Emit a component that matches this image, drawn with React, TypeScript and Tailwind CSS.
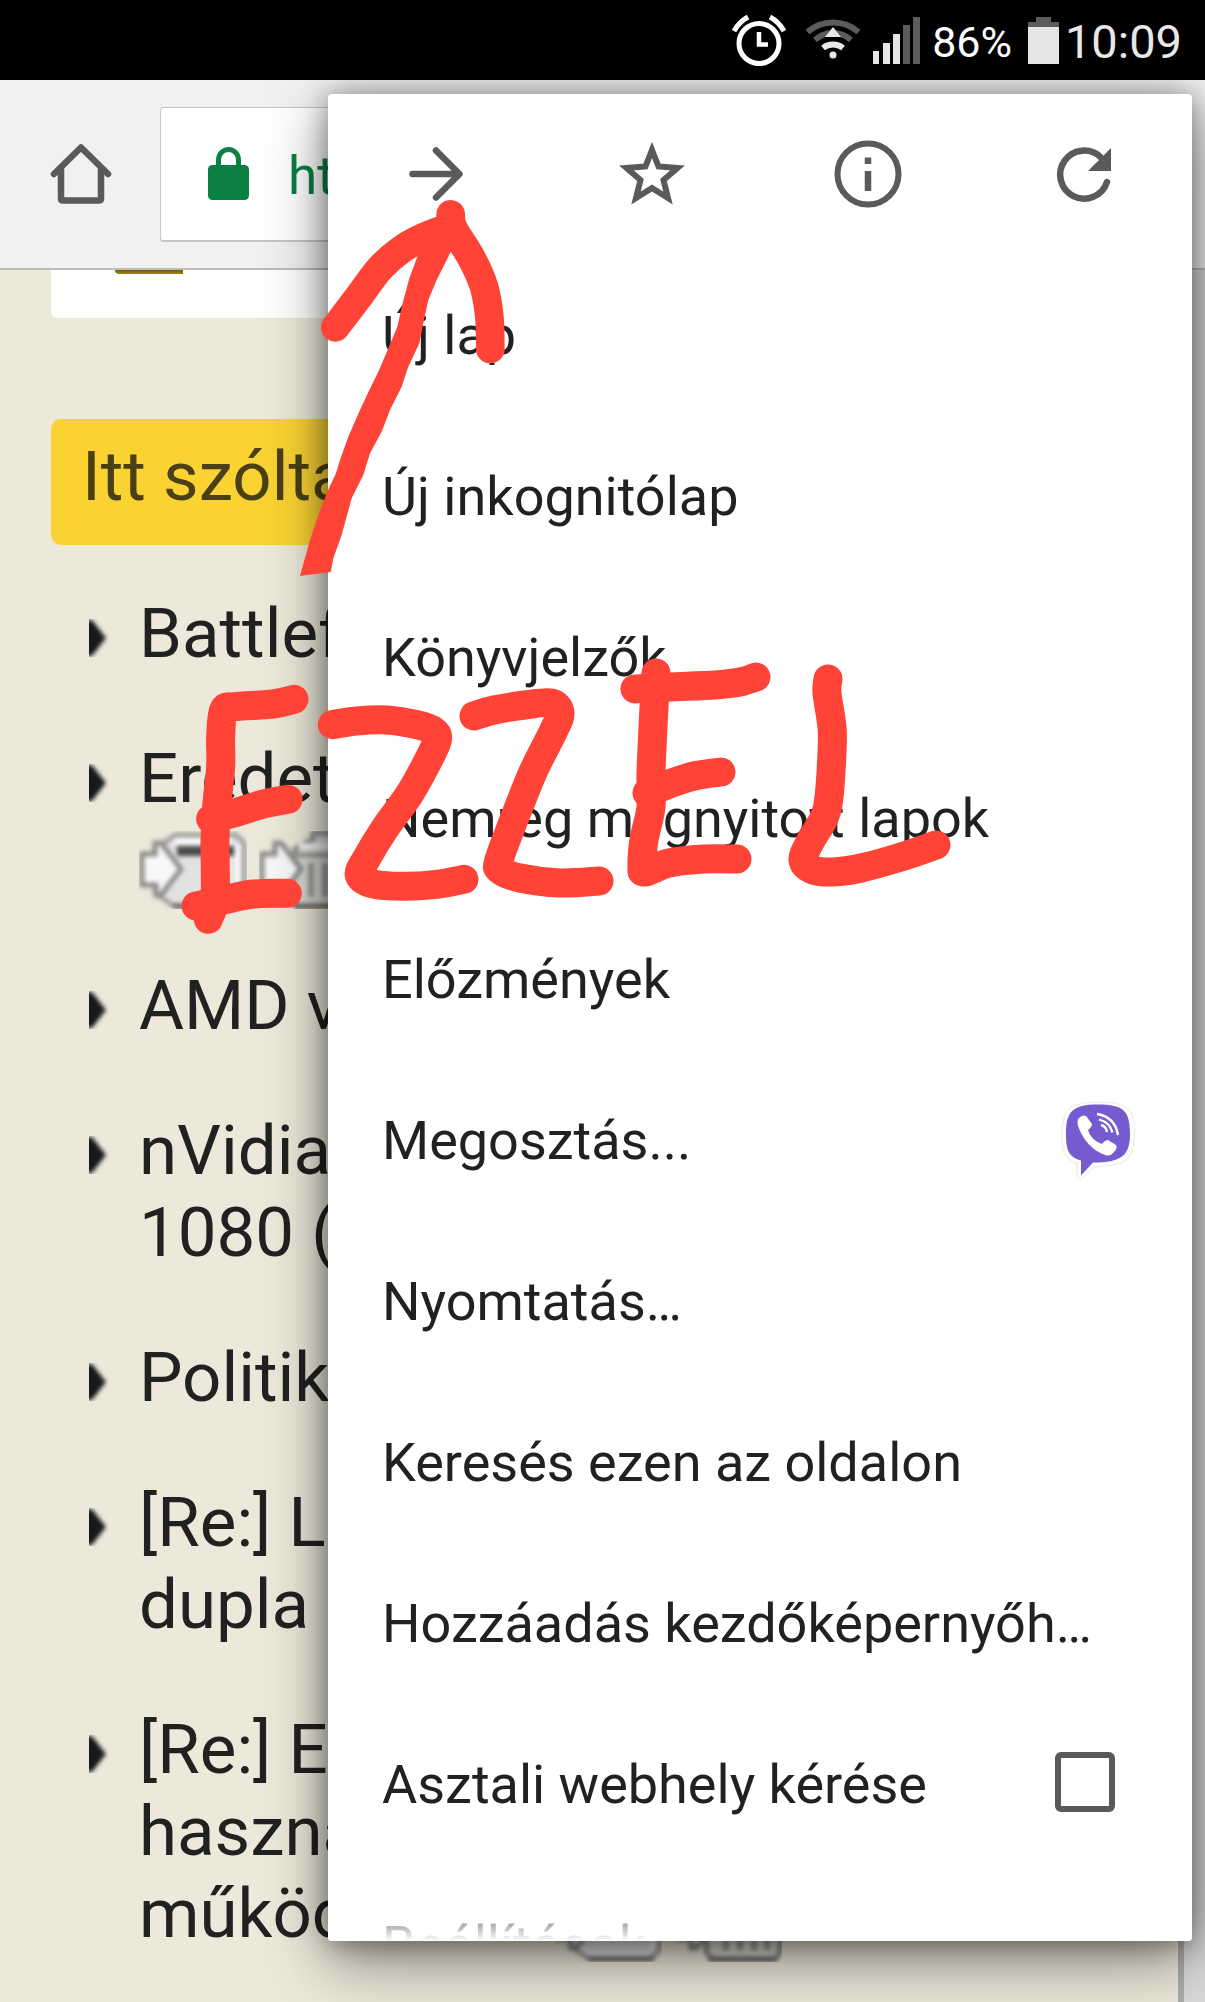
import type { ReactNode } from "react";

type Point = [number, number];

/* Turns a list of points into a smooth freehand path. */
function smooth(points: Point[]): string {
  let d = `M${points[0][0]} ${points[0][1]}`;
  for (let i = 0; i < points.length - 1; i++) {
    const a = points[i - 1] ?? points[i];
    const b = points[i];
    const c = points[i + 1];
    const e = points[i + 2] ?? c;
    d += ` C${b[0] + (c[0] - a[0]) / 6} ${b[1] + (c[1] - a[1]) / 6} ${c[0] - (e[0] - b[0]) / 6} ${c[1] - (e[1] - b[1]) / 6} ${c[0]} ${c[1]}`;
  }
  return d;
}

const arrowStrokes: Point[][] = [
  [[166, 412], [240, 315], [300, 235], [365, 178], [430, 142], [512, 110]],
  [[512, 73], [520, 115], [575, 205], [612, 290], [628, 380], [631, 477]],
];

const leftLetters: Point[][] = [
  [[522, 178], [460, 192], [345, 200], [311, 210], [302, 290], [302, 380], [290, 500], [285, 600], [285, 770], [265, 838]],
  [[272, 537], [350, 517], [430, 492], [504, 478]],
  [[228, 798], [310, 780], [400, 762], [502, 760]],
  [[637, 254], [710, 243], [800, 240], [890, 254], [940, 272], [952, 300], [920, 370], [870, 460], [795, 565], [740, 655], [718, 705], [760, 732], [850, 739], [950, 733], [1032, 718]],
];

const rightLetters: Point[][] = [
  [[474, 716], [494, 710], [525, 705], [551, 703], [560, 713], [553, 732], [533, 772], [513, 822], [499, 860], [500, 870], [520, 878], [560, 883], [599, 881]],
  [[635, 689], [669, 687], [715, 685], [740, 682], [756, 677]],
  [[656, 673], [654, 707], [651, 773], [651, 807], [644, 840], [642, 866], [645, 872], [669, 863], [704, 859], [737, 859]],
  [[647, 793], [669, 784], [694, 776], [721, 772]],
  [[828, 679], [827, 693], [832, 727], [832, 752], [829, 797], [824, 818], [810, 842], [803, 860], [813, 870], [833, 872], [861, 868], [901, 857], [936, 845]],
];

function Annotation() {
  return (
    <svg
      className="pointer-events-none absolute left-0 top-0 z-30 h-[2002px] w-[1205px] max-w-none"
      viewBox="0 0 1205 2002"
      fill="none"
      stroke="#ff4336"
      strokeLinecap="round"
      strokeLinejoin="round"
      aria-hidden="true"
    >
      <g transform="translate(280 190) scale(0.33333)" strokeWidth="86">
        {arrowStrokes.map((p, i) => (
          <path key={i} d={smooth(p)} />
        ))}
        <path
          stroke="none"
          fill="#ff4336"
          d="M430 120L412 200L388 265L368 340L352 410L325 475L295 545L268 600L240 660L205 740L180 810L168 850L142 905L112 985L90 1050L60 1158L152 1146L160 1105L185 1035L215 925L250 855L270 790L305 725L330 660L365 590L385 530L418 460L432 390L445 330L470 270L512 186L540 120Z"
        />
      </g>
      <g transform="translate(120 640) scale(0.33333)" strokeWidth="87">
        {leftLetters.map((p, i) => (
          <path key={i} d={smooth(p)} />
        ))}
      </g>
      <g strokeWidth="29">
        {rightLetters.map((p, i) => (
          <path key={i} d={smooth(p)} />
        ))}
      </g>
    </svg>
  );
}

function StatusBar() {
  return (
    <header className="relative z-20 flex h-[80px] shrink-0 items-center justify-end bg-black pr-[23px] text-white">
      <svg className="h-[80px] w-[54px]" viewBox="732 0 54 80" fill="none" stroke="#fff" aria-label="Ébresztő">
        <circle cx="759" cy="43.500" r="20" strokeWidth="5" />
        <path d="M759 32v12.500h9" strokeWidth="4.500" />
        <path d="M734 31q5-9 14-14M784 31q-5-9-14-14" strokeWidth="5" />
      </svg>
      <svg className="ml-[18px] h-[80px] w-[58px]" viewBox="804 0 58 80" fill="none" aria-label="Wi-Fi">
        <path d="M807.500 32a39 39 0 0 1 51 0" stroke="#5c5c5c" strokeWidth="6" />
        <path d="M815 40a27 27 0 0 1 36 0" stroke="#5c5c5c" strokeWidth="6" />
        <path d="M823 48a16 16 0 0 1 20 0" stroke="#e8e8e8" strokeWidth="6" />
        <path d="M833 27l8 10h-16z" fill="#e8e8e8" />
        <circle cx="833" cy="55" r="3.500" fill="#e8e8e8" />
      </svg>
      <svg className="ml-[10px] h-[80px] w-[48px]" viewBox="872 0 48 80" aria-label="Térerő">
        <path d="M873 51h6v13h-6zM883 43h7v21h-7zM893 34h7v30h-7z" fill="#e6e6e6" />
        <path d="M903 25h7v39h-7zM913 17h7v47h-7z" fill="#5c5c5c" />
      </svg>
      <span className="ml-[12px] pt-[4px] text-[43px] leading-[76px]">86%</span>
      <svg className="ml-[16px] h-[80px] w-[32px]" viewBox="1028 0 32 80" aria-label="Akkumulátor">
        <path d="M1028 22h8v-5h15v5h8v6h-31z" fill="#5c5c5c" />
        <path d="M1028 27h31v37h-31z" fill="#e6e6e6" />
      </svg>
      <time className="ml-[5px] pt-[4px] text-[47px] leading-[76px] text-[#e8e8e8]">10:09</time>
    </header>
  );
}

function Toolbar() {
  return (
    <div className="relative z-[1] flex h-[190px] shrink-0 items-center border-b-2 border-[#bcbcb8] bg-[#f1f1f1] pl-[50px]">
      <button type="button" aria-label="Kezdőlap">
        <svg className="h-[62px] w-[62px]" viewBox="49.500 143 62 62" fill="none" stroke="#5a5a5a" strokeWidth="6.500" strokeLinecap="round" strokeLinejoin="round">
          <path d="M53.500 174L80.500 147.500L107.500 174" />
          <path d="M60.500 168V198.500q0 2 2 2h36q2 0 2-2V168" />
        </svg>
      </button>
      <div className="ml-[48px] mr-[120px] flex h-[135px] flex-1 items-center rounded-[4px] border border-b-2 border-[#c6c6c6] bg-white pl-[47px]">
        <svg className="h-[54px] w-[42px] shrink-0" viewBox="208 146 42 54" aria-hidden="true">
          <rect x="208" y="164" width="41" height="35" rx="4.500" fill="#0b8043" />
          <path d="M218.500 166v-7a10 10.500 0 0 1 20 0v7" fill="none" stroke="#0b8043" strokeWidth="5" />
        </svg>
        <input
          aria-label="Webcím"
          defaultValue="https://"
          className="ml-[38px] w-full min-w-0 bg-transparent pt-[4px] text-[53px] leading-[62px] text-[#0b8043] outline-none"
        />
      </div>
    </div>
  );
}

/* Soft-edged forum icons: a page with an arrow, and a bin with an arrow. */
function PostIcon({ bin = false }: { bin?: boolean }) {
  return (
    <svg className="h-[78px] w-[108px] shrink-0" viewBox="0 0 108 78" aria-hidden="true">
      <g className="blur-[2px]">
        {bin ? (
          <>
            <path d="M36 18L32 68l7 8h62l5-8V14l-8-7H86V2H54v6z" fill="#d9d9d4" stroke="#8a8a8a" strokeWidth="5" />
            <path d="M30 24h76" stroke="#9a9a9a" strokeWidth="5" />
            <path d="M40 15h58" stroke="#f7f7f7" strokeWidth="6" />
            <path d="M52 32v34M66 32v34M80 32v34M93 32v34" stroke="#8d8d89" strokeWidth="5" />
            <path d="M34 75h68" stroke="#666" strokeWidth="5" />
          </>
        ) : (
          <>
            <path d="M18 17L36 4h61l8 8v54l-8 9H35L16 62z" fill="#e2e2e2" stroke="#a0a0a0" strokeWidth="5" />
            <path d="M36 10h56" stroke="#fff" strokeWidth="5" />
            <path d="M38 20h57" stroke="#4a4a4a" strokeWidth="10" />
            <path d="M99 14v52" stroke="#fff" strokeWidth="5" />
            <path d="M34 75h66" stroke="#666" strokeWidth="5" />
          </>
        )}
        <path d="M3 23h13V12h6l20 26-20 26h-5V54H3z" fill="#f8f8f8" stroke="#8a8a8a" strokeWidth="5" />
      </g>
    </svg>
  );
}

function Topic({ children }: { children: ReactNode }) {
  return (
    <li className="flex">
      <svg className="mt-[26px] h-[38px] w-[20px] shrink-0 overflow-hidden" viewBox="0 0 20 38" aria-hidden="true">
        <path className="blur-[2px]" d="M-8 1h11l14 18L3 37H-8z" fill="#18181c" />
      </svg>
      <div className="ml-[30px] whitespace-nowrap">{children}</div>
    </li>
  );
}

function TopicLink({ lines }: { lines: string[] }) {
  return (
    <a href="#tema">
      {lines.map((line, i) => (
        <span key={line}>
          {i > 0 && <br />}
          {line}
        </span>
      ))}
    </a>
  );
}

function ForumPage() {
  return (
    <main className="flex flex-1 bg-[#dadada]">
      <div className="mr-[21px] min-w-0 flex-1 overflow-hidden border-r-[6px] border-[#acacac] bg-[#ece9da] pl-[51px] text-[69px] leading-[82px] text-[#212121]">
        <div className="h-[48px] rounded-bl-[6px] bg-white pl-[64px]">
          <div className="h-[4px] w-[68px] rounded-bl-[6px] bg-gradient-to-b from-[#6f5a06] to-[#a68608]" />
        </div>
        <h2 className="mt-[101px] h-[126px] whitespace-nowrap rounded-[10px] bg-[#fad333] pl-[31px] pt-[17px] text-[#4b4015]">
          Itt szólta
        </h2>
        <ul className="mt-[48px] flex flex-col gap-[63px] pl-[38px]">
          <Topic><TopicLink lines={["Battlef"]} /></Topic>
          <Topic>
            <TopicLink lines={["Eredet"]} />
            <span className="flex h-[82px] items-start gap-[12px] pt-[11px]">
              <PostIcon />
              <PostIcon bin />
            </span>
          </Topic>
          <Topic><TopicLink lines={["AMD v"]} /></Topic>
          <Topic><TopicLink lines={["nVidia", "1080 ("]} /></Topic>
          <Topic><TopicLink lines={["Politik"]} /></Topic>
          <Topic><TopicLink lines={["[Re:] L", "dupla"]} /></Topic>
          <Topic>
            <TopicLink lines={["[Re:] E", "haszná"]} />
            <span className="flex h-[82px] gap-[12px]">
              <span className="w-[403px]">működ</span>
              <span className="flex gap-[12px] pt-[11px]">
                <PostIcon />
                <PostIcon bin />
              </span>
            </span>
          </Topic>
        </ul>
      </div>
    </main>
  );
}

function ActionButton({ label, children }: { label: string; children: ReactNode }) {
  return (
    <button type="button" aria-label={label} className="flex h-full items-center justify-center">
      <svg className="h-[72px] w-[72px]" viewBox="-36 -36 72 72" fill="none" stroke="#5a5a5a" strokeWidth="6.500">
        {children}
      </svg>
    </button>
  );
}

function ViberIcon() {
  return (
    <svg className="h-[76px] w-[76px] drop-shadow-[0_0_1px_rgba(0,0,0,0.2)]" viewBox="1060 1102 76 76">
      <path
        d="M1098 1105C1128 1105 1131 1112 1130 1134C1130 1156 1124 1161.500 1093 1161.500L1081 1173V1159.500C1068 1156 1066 1149 1066 1134C1066 1112 1070 1105 1098 1105Z"
        fill="#fff"
        stroke="#fff"
        strokeWidth="7"
        strokeLinejoin="round"
      />
      <path
        d="M1098 1103.500C1124 1103.500 1130 1110 1130 1133C1130 1155 1121 1161.500 1093 1161.500L1081 1174.500V1159.500C1068 1156 1066 1148 1066 1133C1066 1111 1072 1103.500 1098 1103.500Z"
        fill="#755bcf"
      />
      <path
        d="M1078 1118q4-5 8-3l6 8q0 3-4 6q3 10 14 14q3-4 6-4l8 5q2 3-2 7q-4 5-9 3q-19-7-27-29q-1-4 0-7z"
        fill="#fff"
      />
      <path
        d="M1097 1113q18 3 21 21M1099 1118.500q11 3 13.500 13M1101 1124q5 1 6 7"
        fill="none"
        stroke="#fff"
        strokeWidth="2.300"
      />
    </svg>
  );
}

const rowClass = "flex h-[161px] w-full shrink-0 items-center";
const labelClass = "min-w-0 flex-1 truncate text-left leading-[80px]";

function MenuRow({ label }: { label: string }) {
  return (
    <button type="button" className={`${rowClass} pl-[54px] pr-[98px]`}>
      <span className={labelClass}>{label}</span>
    </button>
  );
}

function BrowserMenu() {
  return (
    <nav className="absolute bottom-[61px] left-[328px] right-[13px] top-[94px] z-10 flex flex-col overflow-hidden rounded-[4px] bg-white text-[54px] text-[#212121] shadow-[0_20px_64px_rgba(0,0,0,0.45),0_2px_28px_rgba(0,0,0,0.4)]">
      <div className="grid h-[161px] shrink-0 grid-cols-4">
        <ActionButton label="Előre">
          <path d="M-23.500 -1H23M0 -24.500L23.500 -1L0 22.500" strokeLinecap="round" strokeLinejoin="round" />
        </ActionButton>
        <ActionButton label="Könyvjelző">
          <path d="M0 -25L6.500 -8.500L25.500 -7L11.500 5L16 23L0 13L-16 23L-11.500 5L-25.500 -7L-6.500 -8.500Z" strokeWidth="6" />
        </ActionButton>
        <ActionButton label="Információ">
          <circle cy="-1" r="30.500" strokeWidth="6" />
          <path d="M0 -17.500V-11M0 -4V16" />
        </ActionButton>
        <ActionButton label="Frissítés">
          <path d="M23 7A24 24 0 1 1 17 -17.500" strokeLinecap="round" />
          <path d="M27 -27V-4H4Z" fill="#5a5a5a" stroke="none" />
        </ActionButton>
      </div>
      <MenuRow label="Új lap" />
      <MenuRow label="Új inkognitólap" />
      <MenuRow label="Könyvjelzők" />
      <MenuRow label="Nemrég megnyitott lapok" />
      <MenuRow label="Előzmények" />
      <div className={`${rowClass} pl-[54px] pr-[56px]`}>
        <button type="button" className={labelClass}>Megosztás...</button>
        <button type="button" aria-label="Megosztás Viberen"><ViberIcon /></button>
      </div>
      <MenuRow label="Nyomtatás…" />
      <MenuRow label="Keresés ezen az oldalon" />
      <MenuRow label="Hozzáadás kezdőképernyőh…" />
      <label className={`${rowClass} pl-[54px] pr-[77px]`}>
        <span className={labelClass}>Asztali webhely kérése</span>
        <input type="checkbox" className="mb-[6px] h-[60px] w-[60px] appearance-none rounded-[6px] border-[6px] border-[#5a5a5a] bg-white checked:bg-[#5a5a5a]" />
      </label>
      <MenuRow label="Beállítások" />
      <div className="pointer-events-none absolute inset-x-0 bottom-0 h-[44px] bg-gradient-to-t from-white to-white/0" />
    </nav>
  );
}

export default function App() {
  return (
    <div className="relative flex h-screen flex-col overflow-hidden font-['Roboto',sans-serif]">
      <StatusBar />
      <Toolbar />
      <ForumPage />
      <BrowserMenu />
      <Annotation />
    </div>
  );
}
